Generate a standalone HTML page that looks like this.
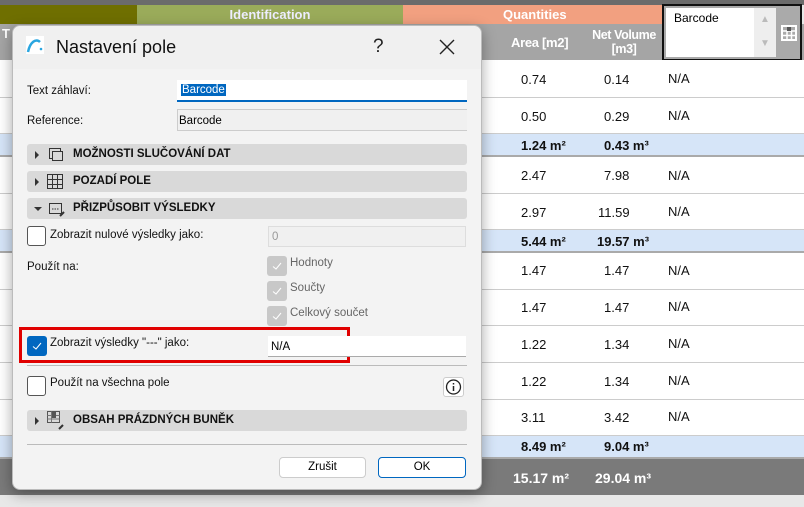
<!DOCTYPE html><html><head><meta charset="utf-8"><style>
*{margin:0;padding:0;box-sizing:border-box}
body{width:804px;height:507px;position:relative;overflow:hidden;background:#e8e8e8;font-family:"Liberation Sans",sans-serif;font-size:12px}
.a{position:absolute}
.r{position:absolute;left:0;width:804px;background:#fff;border-bottom:1px solid #ccc}
.b{background:#d6e5f8;font-weight:bold;border-bottom:2px solid #aaa}
.t{position:absolute;font-size:13px;color:#111}
.sec{position:absolute;left:27px;width:440px;height:21px;background:#d9d9d9;border-radius:3px;font-weight:bold;font-size:11.5px;color:#111}
.sec span{position:absolute;left:46px;top:4px}
.tri{position:absolute;left:8px;top:7px;width:0;height:0;border-top:4px solid transparent;border-bottom:4px solid transparent;border-left:4px solid #333}
.cb{position:absolute;width:19px;height:20px;border:1px solid #555;border-radius:3px;background:#fff}
.dcb{position:absolute;left:267px;width:20px;height:20px;background:#c8c8c8;border-radius:3px}
.lbl{position:absolute;font-size:11.5px;color:#111}
</style></head><body>
<div class="a" style="left:0;top:0;width:804px;height:5px;background:#6b6b6b"></div>
<div class="a" style="left:0;top:5px;width:137px;height:19px;background:#6f6f00"></div>
<div class="a" style="left:137px;top:5px;width:266px;height:19px;background:#9aab5a;color:#eef;font-weight:bold;font-size:13px;text-align:center;line-height:19px">Identification</div>
<div class="a" style="left:403px;top:5px;width:260px;height:19px;background:#f2a080;color:#fff;font-weight:bold;font-size:13px;line-height:19px;padding-left:100px">Quantities</div>
<div class="a" style="left:0;top:24px;width:804px;height:36px;background:#a5a5a5"></div>
<div class="a" style="left:511px;top:35px;color:#fff;font-weight:bold;font-size:13px;letter-spacing:-0.3px">Area [m2]</div>
<div class="a" style="left:582px;top:28px;color:#fff;font-weight:bold;font-size:12.5px;text-align:center;line-height:14px;width:84px;letter-spacing:-0.4px">Net Volume<br>[m3]</div>
<div class="a" style="left:662px;top:4px;width:140px;height:57px;border:2px solid #111;background:#aaa"><div class="a" style="left:2px;top:2px;width:88px;height:49px;background:#fff;font-size:12px;padding:3px 8px">Barcode</div><div class="a" style="left:90px;top:2px;width:22px;height:49px;background:#eee;color:#bbb;font-size:10px;text-align:center;line-height:24px">▲<br>▼</div><svg class="a" style="left:117px;top:19px" width="16" height="16"><rect x="1" y="1" width="14" height="14" fill="none" stroke="#fff" stroke-width="2"/><path d="M1 6H15M1 10.5H15M6 6V15M10.5 6V15" stroke="#fff" stroke-width="1.5"/><rect x="6" y="2" width="4" height="4" fill="#555"/></svg></div>
<div class="r" style="top:60px;height:38px"></div><div class="r" style="top:98px;height:36px"></div>
<div class="r b" style="top:134px;height:23px"></div>
<div class="r" style="top:157px;height:37px"></div><div class="r" style="top:194px;height:36px"></div>
<div class="r b" style="top:230px;height:23px"></div>
<div class="r" style="top:253px;height:37px"></div><div class="r" style="top:290px;height:36px"></div><div class="r" style="top:326px;height:37px"></div><div class="r" style="top:363px;height:37px"></div><div class="r" style="top:400px;height:36px"></div>
<div class="r b" style="top:436px;height:23px"></div>
<div class="a" style="left:0;top:459px;width:804px;height:36px;background:#7a7a7a"></div>
<div class="t" style="left:521px;top:72px">0.74</div><div class="t" style="left:604px;top:72px">0.14</div><div class="t" style="left:668px;top:71px">N/A</div>
<div class="t" style="left:521px;top:109px">0.50</div><div class="t" style="left:604px;top:109px">0.29</div><div class="t" style="left:668px;top:108px">N/A</div>
<div class="t" style="left:521px;top:138px;font-weight:bold">1.24 m²</div><div class="t" style="left:604px;top:138px;font-weight:bold">0.43 m³</div>
<div class="t" style="left:521px;top:168px">2.47</div><div class="t" style="left:604px;top:168px">7.98</div><div class="t" style="left:668px;top:168px">N/A</div>
<div class="t" style="left:521px;top:205px">2.97</div><div class="t" style="left:598px;top:205px">11.59</div><div class="t" style="left:668px;top:204px">N/A</div>
<div class="t" style="left:521px;top:234px;font-weight:bold">5.44 m²</div><div class="t" style="left:597px;top:234px;font-weight:bold">19.57 m³</div>
<div class="t" style="left:521px;top:263px">1.47</div><div class="t" style="left:604px;top:263px">1.47</div><div class="t" style="left:668px;top:263px">N/A</div>
<div class="t" style="left:521px;top:300px">1.47</div><div class="t" style="left:604px;top:300px">1.47</div><div class="t" style="left:668px;top:299px">N/A</div>
<div class="t" style="left:521px;top:337px">1.22</div><div class="t" style="left:604px;top:337px">1.34</div><div class="t" style="left:668px;top:336px">N/A</div>
<div class="t" style="left:521px;top:374px">1.22</div><div class="t" style="left:604px;top:374px">1.34</div><div class="t" style="left:668px;top:373px">N/A</div>
<div class="t" style="left:521px;top:410px">3.11</div><div class="t" style="left:604px;top:410px">3.42</div><div class="t" style="left:668px;top:409px">N/A</div>
<div class="t" style="left:521px;top:439px;font-weight:bold">8.49 m²</div><div class="t" style="left:604px;top:439px;font-weight:bold">9.04 m³</div>
<div class="t" style="left:513px;top:470px;font-weight:bold;color:#fff;font-size:14px">15.17 m²</div><div class="t" style="left:595px;top:470px;font-weight:bold;color:#fff;font-size:14px">29.04 m³</div>
<div class="a" style="left:2px;top:26px;color:#fff;font-weight:bold;font-size:13px">T</div>
<!-- dialog -->
<div class="a" style="left:12px;top:25px;width:470px;height:465px;background:#f3f3f3;border-radius:8px;box-shadow:0 4px 14px rgba(0,0,0,.35);border:1px solid #bbb">
<div class="a" style="left:0;top:0;width:468px;height:43px;background:#f0f0f0;border-radius:8px 8px 0 0"></div>
<svg class="a" style="left:13px;top:10px" width="18" height="18" viewBox="0 0 18 18"><rect width="18" height="18" fill="#fff"/><path d="M2 16 C4 6 10 2 14 6" stroke="#2aa6e0" stroke-width="2.5" fill="none"/><circle cx="15" cy="13" r="1.3" fill="#2aa6e0"/></svg>
<div class="a" style="left:43px;top:11px;font-size:18px;color:#111">Nastavení pole</div>
<div class="a" style="left:360px;top:10px;font-size:19px;color:#222">?</div>
<svg class="a" style="left:426px;top:13px" width="16" height="16"><path d="M1 1L15 15M15 1L1 15" stroke="#222" stroke-width="1.4"/></svg>
</div>
<div class="lbl" style="left:27px;top:85px">Text záhlaví:</div>
<div class="a" style="left:177px;top:80px;width:290px;height:22px;background:#fff;border-bottom:2px solid #0067c0"><span class="a" style="left:4px;top:4px;background:#0067c0;color:#fff;font-size:11.5px;padding:0 1px">Barcode</span></div>
<div class="lbl" style="left:27px;top:115px">Reference:</div>
<div class="a" style="left:177px;top:109px;width:290px;height:22px;background:#f0f0f0;border:1px solid #ccc;border-right:none"><span class="a" style="left:1px;top:5px;font-size:11.5px">Barcode</span></div>
<div class="sec" style="top:144px"><div class="tri"></div><svg class="a" style="left:22px;top:4px" width="14" height="13"><rect x=".5" y=".5" width="11" height="10" fill="none" stroke="#333"/><rect x="3.5" y="3.5" width="10" height="9" fill="#d9d9d9" stroke="#333"/></svg><span>MOŽNOSTI SLUČOVÁNÍ DAT</span></div>
<div class="sec" style="top:171px"><div class="tri"></div><svg class="a" style="left:20px;top:3px" width="16" height="15"><rect x=".5" y=".5" width="15" height="14" fill="none" stroke="#333"/><path d="M5.5 0V15M10.5 0V15M0 5.5H16M0 10.5H16" stroke="#333"/></svg><span>POZADÍ POLE</span></div>
<div class="sec" style="top:198px"><div style="position:absolute;left:7px;top:9px;border-left:4px solid transparent;border-right:4px solid transparent;border-top:4px solid #333"></div><svg class="a" style="left:22px;top:3px" width="16" height="16"><rect x=".5" y="2.5" width="12" height="10" fill="none" stroke="#333"/><path d="M3 8H10" stroke="#333" stroke-dasharray="1.5 1"/><path d="M11 15L15 11" stroke="#333" stroke-width="2"/></svg><span>PŘIZPŮSOBIT VÝSLEDKY</span></div>
<div class="cb" style="left:27px;top:226px"></div>
<div class="lbl" style="left:50px;top:229px">Zobrazit nulové výsledky jako:</div>
<div class="a" style="left:268px;top:226px;width:198px;height:21px;background:#f0f0f0;border:1px solid #ddd;color:#999;font-size:11.5px;padding:4px 3px">0</div>
<div class="lbl" style="left:27px;top:261px">Použít na:</div>
<div class="dcb" style="top:256px"><svg width="20" height="20"><path d="M6 10.5L9 13L14 7" stroke="#fff" fill="none"/></svg></div><div class="lbl" style="left:290px;top:257px;color:#666">Hodnoty</div>
<div class="dcb" style="top:281px"><svg width="20" height="20"><path d="M6 10.5L9 13L14 7" stroke="#fff" fill="none"/></svg></div><div class="lbl" style="left:290px;top:282px;color:#666">Součty</div>
<div class="dcb" style="top:306px"><svg width="20" height="20"><path d="M6 10.5L9 13L14 7" stroke="#fff" fill="none"/></svg></div><div class="lbl" style="left:290px;top:307px;color:#666">Celkový součet</div>
<div class="a" style="left:19px;top:327px;width:331px;height:36px;border:3px solid #e00000"></div>
<div class="a" style="left:27px;top:336px;width:20px;height:20px;background:#0067c0;border-radius:3px"><svg width="20" height="20"><path d="M6 10.5L9 13L14 7" stroke="#fff" fill="none"/></svg></div>
<div class="lbl" style="left:50px;top:337px">Zobrazit výsledky "---" jako:</div>
<div class="a" style="left:268px;top:336px;width:198px;height:21px;background:#fff;border-bottom:1px solid #aaa;font-size:11.5px;padding:5px 3px">N/A</div>
<div class="a" style="left:27px;top:365px;width:440px;height:1px;background:#bbb"></div>
<div class="cb" style="left:27px;top:376px"></div>
<div class="lbl" style="left:50px;top:377px">Použít na všechna pole</div>
<div class="a" style="left:443px;top:377px;width:21px;height:20px;border:1px solid #ccc;background:#fff;border-radius:3px"><svg width="19" height="18"><circle cx="9.5" cy="9" r="7" fill="none" stroke="#222" stroke-width="1.3"/><path d="M9.5 8V13M9.5 5V6.5" stroke="#222" stroke-width="1.5"/></svg></div>
<div class="sec" style="top:410px"><div class="tri"></div><svg class="a" style="left:20px;top:1px" width="18" height="19"><rect x=".5" y=".5" width="12" height="11" fill="none" stroke="#555"/><path d="M0.5 4.5H12.5M0.5 8H12.5M4.5 0.5V11.5" stroke="#777"/><rect x="5" y="1" width="4" height="6" fill="#555"/><path d="M12 18L16 14" stroke="#333" stroke-width="2"/></svg><span>OBSAH PRÁZDNÝCH BUNĚK</span></div>
<div class="a" style="left:27px;top:444px;width:440px;height:1px;background:#bbb"></div>
<div class="a" style="left:279px;top:457px;width:87px;height:21px;background:#fff;border:1px solid #ccc;border-radius:4px;text-align:center;line-height:19px;font-size:11.5px">Zrušit</div>
<div class="a" style="left:378px;top:457px;width:88px;height:21px;background:#fff;border:1px solid #0067c0;border-radius:4px;text-align:center;line-height:19px;font-size:11.5px">OK</div>
</body></html>
